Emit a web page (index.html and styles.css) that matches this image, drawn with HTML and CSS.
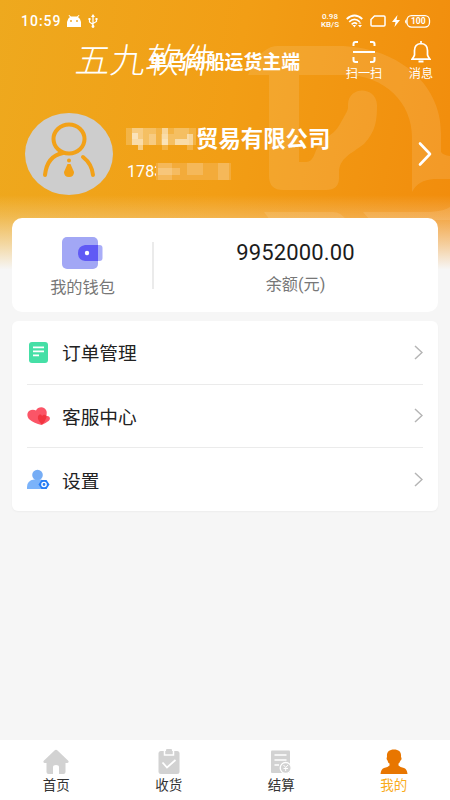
FILE: index.html
```html
<!DOCTYPE html>
<html lang="zh-CN">
<head>
<meta charset="utf-8">
<title>我的</title>
<link rel="stylesheet" href="styles.css">
</head>
<body>
<div class="screen">
  <div class="backdrop">
    <svg width="450" height="271" viewBox="0 0 450 271" fill="#fff" fill-opacity=".11">
      <path d="M248 75C254 61 263 46 278 46H338C395 46 441 82 441 133V152Q443 155 450 156V179H434Q418 180 412 192V137C412 103 385 75 345 75H299V162H306Q312 162 315 153C322 134 332 139 340 124C349 108 348 110 348 104C349 86 376 86 377 105C377 120 376 131 364 144C351 154 339 158 339 173V178Q339 190 326 190H283Q269 190 269 176V75Z"/>
      <path d="M264 212H333Q341 212 346 220H270ZM363 212H430Q445 211 450 207V220H370Z"/>
    </svg>
    <div class="fade"></div>
  </div>
  <header>
    <div class="status">
      <span class="time">10:59</span>
      <svg class="droid" width="14" height="13" viewBox="0 0 14 13" fill="#fff"><path d="M0 12V7Q1 3 3 2L1.500.5 2.200 0 4 1.500H10L11.800 0 12.500.5 11 2Q14 4 14 7V12Z"/><circle cx="4" cy="6" r=".9" fill="#efa21c"/><circle cx="10" cy="6" r=".9" fill="#efa21c"/></svg>
      <svg class="usb" width="10" height="14" viewBox="0 0 10 14" fill="none" stroke="#fff" stroke-width="1.200"><path d="M5 12V2M1.500 5V8L5 10.500M8.500 5V7.500L5 9.500"/><path d="M3 3 5 0 7 3ZM.5 4h2v2h-2zM7.500 4h2v2h-2z" fill="#fff" stroke="none"/><circle cx="5" cy="12.500" r="1.400" fill="#fff" stroke="none"/></svg>
      <div class="speed"><span>0.98</span><span>KB/S</span></div>
      <svg class="wifi" width="17" height="14" viewBox="0 0 17 14" fill="none" stroke="#fff" stroke-width="1.700"><path d="M.7 5Q8.500-2 16.300 5M3.200 7.800Q8.500 3 13.800 7.800M5.600 10.300Q8.500 7.800 11 10"/><path d="M6.500 11 8.500 13.500 10 11ZM12 11h4l-2 2.500zM12.500 9.500 14 8l1.500 1.500z" fill="#fff" stroke="none"/></svg>
      <svg class="sim" width="16" height="12" viewBox="0 0 16 12" fill="none" stroke="#fff" stroke-width="1.500"><path d="M4.500 1H14Q15 1 15 2V10Q15 11 14 11H2Q1 11 1 10V4.500Z"/></svg>
      <svg class="bolt" width="8" height="12" viewBox="0 0 8 12" fill="#fff"><path d="M5.500 0 0 7H3.500L2.500 12 8 5H4.500Z"/></svg>
      <svg class="battery" width="26" height="13" viewBox="0 0 26 13"><rect x="2" y=".7" width="22.500" height="11.400" rx="4.500" fill="none" stroke="#fff" stroke-width="1.300"/><path d="M1.500 4V9Q0 8 0 6.500T1.500 4Z" fill="#fff"/><text x="13.200" y="9.300" text-anchor="middle" class="charge">100</text></svg>
    </div>
    <div class="title">单马动船运货主端</div>
    <div class="watermark">五九软件</div>
    <div class="action scan">
      <svg width="24" height="22" viewBox="0 0 24 22" fill="none" stroke="#fff" stroke-width="2"><path d="M1.500 5V3Q1.500 1 3.500 1H6M18 1h2.500Q22.500 1 22.500 3V5M1.500 16v3Q1.500 21 3.500 21H6M18 21h2.500q2 0 2-2V16M1 11H23"/></svg>
      <span>扫一扫</span>
    </div>
    <div class="action news">
      <svg width="20" height="22" viewBox="0 0 20 22" fill="none" stroke="#fff" stroke-width="1.700"><path d="M10 0V3M10 2.500Q16.500 3 16.500 9.500V14Q17 16 19 18.200H1Q3 16 3.500 14V9.500Q3.500 3 10 2.500Z"/><path d="M7.500 20.500h5" stroke-width="2"/></svg>
      <span>消息</span>
    </div>
  </header>
  <section class="profile">
    <svg class="avatar" width="88" height="82" viewBox="0 0 88 82"><ellipse cx="44" cy="41" rx="44" ry="41" fill="#cdcdcd"/><g fill="none" stroke="#f2a118" stroke-width="4" stroke-linecap="round"><ellipse cx="44" cy="26" rx="15.500" ry="14.500"/><path d="M20 62Q22 43 38 40M58 44Q67 51 68 62"/></g><circle cx="44" cy="47.500" r="2" fill="#f2a118"/><path d="M42.500 51h3L49 59Q49 64 44 64T39 59Z" fill="#f2a118"/></svg>
    <div class="identity">
      <div class="company"><span class="mask-name"></span>贸易有限公司</div>
      <div class="phone">1783</div>
    </div>
    <svg class="mosaic" width="115" height="65" viewBox="0 0 115 65" shape-rendering="crispEdges">
      <rect x="34" y="43" width="75" height="17" fill="#f3ab3a"/>
      <g fill="#fff">
      <path opacity=".2" d="M4 8H74V25H4Z"/>
      <path opacity=".16" d="M10 8h24v17h-24zM52 8h15v6h-15zM39 14h28v11h-28zM36 43h14v17h-14zM65 43h16v12h-16zM96 43h11v17h-11z"/>
      <path opacity=".45" d="M10 13h6v12h-6zM16 19h5v11h-5zM40 8h6v17h-6zM53 19h12v6h-12zM65 14h6v11h-6z"/>
      <path opacity=".2" d="M10 8h11v11h-11zM27 14h7v11h-7zM40 19h6v11h-6zM65 25h6v5h-6zM36 48h22v7h-22z"/>
      </g>
    </svg>
    <svg class="enter" width="14" height="26" viewBox="0 0 14 26" fill="none" stroke="#fff" stroke-width="2.600" stroke-linecap="round" stroke-linejoin="round"><path d="M2 2.500 12 13 2 23.500"/></svg>
  </section>
  <section class="wallet">
    <div class="purse">
      <svg width="41" height="32" viewBox="0 0 41 32"><rect width="36" height="32" rx="5" fill="#a2a7f5"/><rect x="30" y="8" width="10.500" height="16" rx="3" fill="#a9adf8"/><path d="M36 8V24H23Q16 23 16 16T23 8Z" fill="#605af5"/><circle cx="25" cy="16" r="2.200" fill="#fff"/></svg>
      <span>我的钱包</span>
    </div>
    <div class="balance"><strong>9952000.00</strong><span>余额(元)</span></div>
  </section>
  <section class="menu">
    <div class="row">
      <svg width="24" height="24" viewBox="0 0 24 24"><rect x="2" y="2" width="19" height="21" rx="3" fill="#45dfa6"/><path d="M6 7.300H17M6 11.300H17M6 15.300H12" stroke="#fff" stroke-width="1.800"/></svg>
      <span>订单管理</span><svg class="arrow" width="9" height="15" viewBox="0 0 9 15"><path d="M1 1 8 7.500 1 14"/></svg>
    </div>
    <div class="row">
      <svg width="24" height="24" viewBox="0 0 24 24"><path d="M9 6.500C11 2 18 2 19.500 7C20 9 19.500 10 19.500 12C23 11.500 24 15 21.500 17Q19 19 14.500 21Q7 19 2.500 15.500C-1 12 0 7 4 6Q7 5.500 9 6.500Z" fill="#fb5567"/><path d="M15 20.500Q10 16 11 12.500C12 10 14 10 15 12C18 9 20 12 19.500 13.500Q18 18 15 20.500Z" fill="#f23540"/></svg>
      <span>客服中心</span><svg class="arrow" width="9" height="15" viewBox="0 0 9 15"><path d="M1 1 8 7.500 1 14"/></svg>
    </div>
    <div class="row">
      <svg width="24" height="24" viewBox="0 0 24 24"><circle cx="10.500" cy="7" r="5.300" fill="#76adf5"/><path d="M0 21V19Q0 12.500 7 11.500H14Q20 13 20 21Z" fill="#7bb3fa"/><path d="M14.500 12h5L22.500 16.500l-3 4.500h-5L11.500 16.500Z" fill="#267df5"/><circle cx="17" cy="16.500" r="2.100" fill="#267df5" stroke="#fff" stroke-width="1.400"/></svg>
      <span>设置</span><svg class="arrow" width="9" height="15" viewBox="0 0 9 15"><path d="M1 1 8 7.500 1 14"/></svg>
    </div>
  </section>
  <nav>
    <div class="tab"><svg width="28" height="26" viewBox="0 0 28 26"><path d="M12.500 1.500Q14 0 15.500 1.500L26.500 12Q27 14 25 14H23.500V23Q23.500 25 21.500 25H17V18Q17 16 14 16T11 18V25H6.500Q4.500 25 4.500 23V14H3Q1 14 1.500 12Z" fill="#d2d2d2"/></svg><span>首页</span></div>
    <div class="tab"><svg width="28" height="26" viewBox="0 0 28 26"><rect x="3.500" y="2" width="21" height="23" rx="2.500" fill="#d2d2d2"/><path d="M9.500 1V6H18.500V1" fill="none" stroke="#fff" stroke-width="1.500"/><rect x="11" y="0" width="6" height="4.500" rx="1" fill="#d2d2d2"/><path d="M7.500 13.500 12 18.500 20.500 11" fill="none" stroke="#fff" stroke-width="1.800"/></svg><span>收货</span></div>
    <div class="tab"><svg width="28" height="26" viewBox="0 0 28 26"><rect x="4" y="1.500" width="19" height="22.500" rx="1" fill="#d2d2d2"/><path d="M7.500 6H19.500M7.500 11H19.500M7.500 16H12" stroke="#fff" stroke-width="1.700"/><circle cx="18.700" cy="19" r="5.500" fill="#d2d2d2" stroke="#fff" stroke-width="1.300"/><path d="M16.500 16 18.700 18.500 21 16M18.700 18.500V22M16.500 19.500H21" fill="none" stroke="#fff"/></svg><span>结算</span></div>
    <div class="tab active"><svg width="28" height="26" viewBox="0 0 28 26"><path d="M14 .5C19 .5 21.500 3 21 8C22 9 21.500 11 20.500 11.500Q19.500 14 18.500 14.500V16.500Q20 18 24 19Q27 20 27.500 25H.5Q1 20 4 19Q8 18 9.500 16.500V14.500Q8 14 7.500 11.500Q6 10 7 8C6.500 3 9 .5 14 .5Z" fill="#e87600"/></svg><span>我的</span></div>
  </nav>
</div>
</body>
</html>
```

FILE: styles.css
```css
* { box-sizing: border-box; }
body { margin: 0; font-family: Roboto, "Noto Sans CJK SC", sans-serif; color: #222; }
svg { display: block; flex: none; }
.screen { position: relative; width: 450px; height: 800px; overflow: hidden; background: #f6f6f6; display: flex; flex-direction: column; }
.backdrop { position: absolute; left: 0; top: 0; width: 450px; height: 271px; background: linear-gradient(100deg, #eea91e 0%, #f29e15 50%, #f28c0c 100%); }
.fade { position: absolute; left: 0; right: 0; bottom: 0; height: 76px; background: linear-gradient(rgba(246,246,246,0), rgba(246,246,246,.23) 28%, rgba(246,246,246,.62) 65%, #f6f6f6 98%); }
header { position: relative; height: 100px; color: #fff; }
.status { display: flex; align-items: center; height: 42px; padding-left: 21px; }
.time { width: 46px; font-size: 14px; font-weight: 500; letter-spacing: 1px; }
.usb { margin-left: 7px; }
.speed { margin-left: 222px; width: 20px; display: flex; flex-direction: column; font-size: 8px; line-height: 8px; font-weight: 500; text-align: center; }
.wifi { margin-left: 6px; }
.sim { margin-left: 7px; }
.bolt { margin-left: 6px; }
.battery { margin-left: 5px; }
.charge { fill: #fff; font-size: 8.5px; font-weight: 700; }
.title { position: absolute; left: 149px; top: 49px; width: 160px; font-size: 18.9px; line-height: 28px; font-weight: 700; white-space: nowrap; }
.watermark { position: absolute; left: 76px; top: 36px; font-family: "Noto Sans CJK SC", sans-serif; font-size: 35px; line-height: 44px; font-weight: 300; white-space: nowrap; transform: skewX(-8deg); }
.action { position: absolute; top: 41px; display: flex; flex-direction: column; align-items: center; width: 50px; font-size: 12.2px; line-height: 22px; white-space: nowrap; }
.scan { left: 339px; }
.news { left: 396px; }
.profile { position: relative; height: 118px; display: flex; align-items: flex-start; color: #fff; padding-left: 25px; }
.avatar { margin-top: 13px; }
.identity { width: 280px; margin-left: 14px; padding-top: 22px; }
.company { display: flex; font-size: 22.4px; line-height: 34px; font-weight: 700; white-space: nowrap; }
.mask-name { width: 69px; }
.phone { font-size: 16px; line-height: 32px; letter-spacing: .1px; }
.mosaic { position: absolute; left: 122px; top: 20px; }
.enter { margin: 41px 0 0 11px; }
.wallet { position: relative; margin: 0 12px; height: 94px; display: flex; background: #fff; border-radius: 10px; color: #777; font-size: 16.2px; line-height: 24px; }
.purse { display: flex; flex-direction: column; align-items: center; width: 141px; padding-top: 19px; position: relative; }
.purse::after { content: ""; position: absolute; right: -1px; top: 24px; width: 2px; height: 47px; background: #ebebeb; }
.purse span { margin-top: 7px; }
.balance { flex: 1; display: flex; flex-direction: column; align-items: center; padding-top: 19px; }
.balance strong { font-size: 22px; line-height: 32px; font-weight: 400; color: #1c1c1c; letter-spacing: .15px; }
.balance span { margin-top: 4px; }
.menu { margin: 9px 12px 0; height: 190px; padding: 0 15px; background: #fff; border-radius: 6px; box-shadow: 0 1px 2px rgba(0,0,0,.04); }
.row { display: flex; align-items: center; height: 63.5px; font-size: 18.7px; border-bottom: 1.5px solid #ebebeb; }
.row:last-child { border: 0; }
.row span { margin: -1px 0 0 11px; flex: 1; }
.arrow { fill: none; stroke: #b5b5b5; stroke-width: 1.5; }
nav { margin-top: auto; height: 60px; display: flex; background: #fff; }
.tab { width: 112.5px; padding-top: 9px; display: flex; flex-direction: column; align-items: center; font-size: 13.5px; line-height: 20px; color: #333; }
.active { color: #f9ac1b; }
```
